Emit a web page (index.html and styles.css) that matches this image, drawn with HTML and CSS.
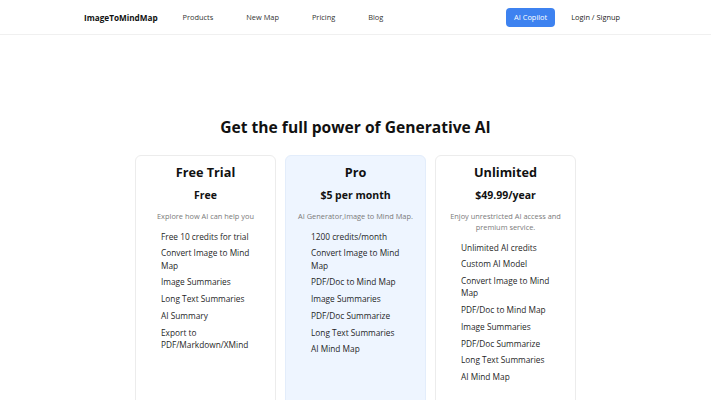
FILE: index.html
```html
<!DOCTYPE html>
<html lang="en">
  <head>
    <meta charset="UTF-8" />
    <meta name="viewport" content="width=device-width, initial-scale=1.0" />
    <title>ImageToMindMap Pricing</title>
    <link rel="stylesheet" href="styles.css">
  </head>
  <body>
    <header class="topbar">
      <a class="logo" href="#">ImageToMindMap</a>
      <nav class="nav">
        <a href="#">Products</a>
        <a href="#">New Map</a>
        <a href="#">Pricing</a>
        <a href="#">Blog</a>
      </nav>
      <div class="actions">
        <a class="copilot" href="#">AI Copilot</a>
        <a class="login" href="#">Login / Signup</a>
      </div>
    </header>

    <section class="pricing">
      <h1>Get the full power of Generative AI</h1>
      <div class="plans">
        <div class="plan">
          <h2>Free Trial</h2>
          <h3>Free</h3>
          <p class="desc">Explore how AI can help you</p>
          <ul>
            <li>Free 10 credits for trial</li>
            <li>Convert Image to Mind Map</li>
            <li>Image Summaries</li>
            <li>Long Text Summaries</li>
            <li>AI Summary</li>
            <li>Export to PDF/Markdown/XMind</li>
          </ul>
        </div>

        <div class="plan pro">
          <h2>Pro</h2>
          <h3>$5 per month</h3>
          <p class="desc">AI Generator,Image to Mind Map.</p>
          <ul>
            <li>1200 credits/month</li>
            <li>Convert Image to Mind Map</li>
            <li>PDF/Doc to Mind Map</li>
            <li>Image Summaries</li>
            <li>PDF/Doc Summarize</li>
            <li>Long Text Summaries</li>
            <li>AI Mind Map</li>
          </ul>
        </div>

        <div class="plan">
          <h2>Unlimited</h2>
          <h3>$49.99/year</h3>
          <p class="desc">Enjoy unrestricted AI access and premium service.</p>
          <ul>
            <li>Unlimited AI credits</li>
            <li>Custom AI Model</li>
            <li>Convert Image to Mind Map</li>
            <li>PDF/Doc to Mind Map</li>
            <li>Image Summaries</li>
            <li>PDF/Doc Summarize</li>
            <li>Long Text Summaries</li>
            <li>AI Mind Map</li>
          </ul>
        </div>
      </div>
    </section>
  </body>
</html>
```

FILE: styles.css
```css
* {
  box-sizing: border-box;
  font-family: "Open Sans", sans-serif;
}
body {
  margin: 0;
  padding: 0;
  color: #1f1f1f;
  background: #ffffff;
}
a {
  text-decoration: none;
  color: inherit;
}
.topbar {
  display: flex;
  align-items: center;
  height: 35px;
  padding: 0 91px 0 84px;
  border-bottom: 1px solid #f0f0f0;
}
.logo {
  font-size: 8.2px;
  font-weight: 700;
  color: #111111;
  margin-right: 25px;
}
.nav {
  display: flex;
  gap: 33px;
}
.nav a {
  font-size: 7.4px;
  color: #333333;
}
.actions {
  margin-left: auto;
  display: flex;
  align-items: center;
  gap: 16px;
}
.copilot {
  background: #3d82f0;
  color: #ffffff;
  font-size: 7.4px;
  border-radius: 4px;
  padding: 5px 8px;
  line-height: 9px;
}
.login {
  font-size: 7.4px;
  color: #222222;
}
.pricing {
  padding-top: 82px;
}
h1 {
  text-align: center;
  font-size: 15.6px;
  font-weight: 700;
  margin: 0 0 18px;
  line-height: 20px;
  color: #111111;
}
.plans {
  display: flex;
  justify-content: center;
  gap: 9px;
}
.plan {
  width: 141px;
  height: 260px;
  border: 1px solid #ececec;
  border-radius: 6px;
  padding-top: 6.5px;
}
.plan.pro {
  background: #eef5ff;
  border-color: #e3edfb;
}
h2 {
  text-align: center;
  font-size: 12.7px;
  font-weight: 700;
  margin: 0;
  line-height: 19px;
  color: #111111;
}
h3 {
  text-align: center;
  font-size: 10.5px;
  font-weight: 700;
  margin: 5.5px 0 0;
  line-height: 16px;
  color: #111111;
}
.desc {
  text-align: center;
  font-size: 7.4px;
  color: #7a7a7a;
  line-height: 11px;
  margin: 8px 10px 6.5px;
}
ul {
  list-style: none;
  margin: 0;
  padding: 0 16px 0 25px;
}
li {
  font-size: 8.3px;
  line-height: 12.5px;
  color: #1f1f1f;
  padding: 2.1px 0;
}
```
